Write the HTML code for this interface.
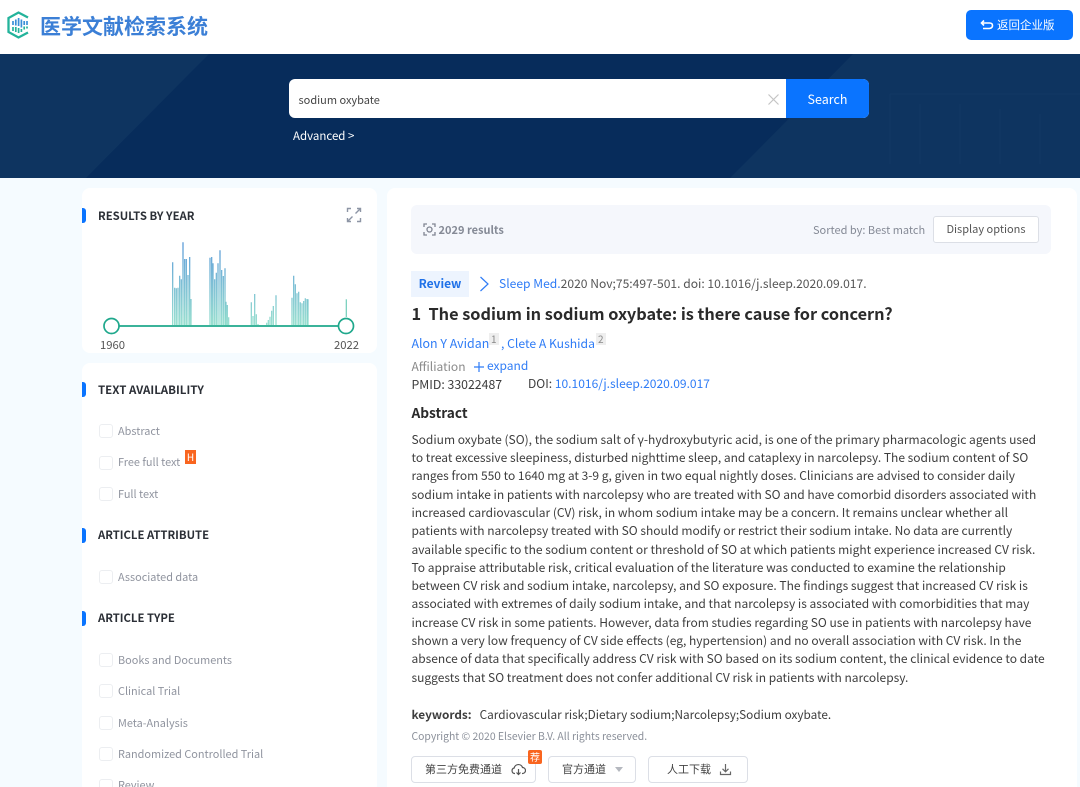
<!DOCTYPE html>
<html><head><meta charset="utf-8">
<style>
html,body{margin:0;padding:0;width:1080px;height:787px;overflow:hidden}
#w{width:1080px;height:787px;overflow:hidden;position:relative;background:#f5fbff;font-family:"Noto Sans CJK SC","Liberation Sans",sans-serif;font-size:12px;color:#3c3c3c}
.a{position:absolute;white-space:nowrap;line-height:18px}
.card{position:absolute;background:#fff;border-radius:8px}
.h{position:absolute;left:98px;font-weight:700;font-size:11.3px;color:#2b2f36;white-space:nowrap;line-height:16px}
.mk{position:absolute;left:82px;width:4px;height:15px;background:#0a74ff;border-radius:0 3px 3px 0}
.cb{position:absolute;left:99px;width:12px;height:12px;border:1px solid #eceef1;border-radius:3px;background:#fff}
.l{position:absolute;left:118px;color:#90949f;font-size:10.9px;line-height:16px;white-space:nowrap}
.t{position:absolute;left:411.5px;white-space:nowrap;font-size:12px;line-height:18px;color:#3d3d3d}
.blue{color:#2f7cf6}
.btn{position:absolute;top:756px;height:27px;border:1px solid #dcdfe6;border-radius:4px;background:#fff;box-sizing:border-box;font-size:11px;line-height:25px;color:#444;white-space:nowrap}
.s{position:absolute;background:#eee;color:#888;font-size:10px;line-height:12px;padding:0 2px}
</style></head><body><div id="w">
<div style="position:absolute;left:0;top:0;width:1080px;height:54px;background:#fff"></div>
<svg style="position:absolute;left:0;top:0" width="36" height="50" viewBox="0 0 36 50">
<path d="M28 17.500L18.500 12.500 8.500 18V32L18.500 37.500 28 32.500" fill="none" stroke="#23b39b" stroke-width="2.300"/>
<path d="M13 21v4M15.800 19.500v6M18.600 18v8M21.400 19.500v8M24.200 21v4M27 21v4" stroke="#3a8fd8" stroke-width="1.700" fill="none"/>
<path d="M13 27v4M15.800 27v5M18.600 28v5M21.400 29v3M24.200 26.500v3M27 26.500v2" stroke="#23b39b" stroke-width="1.700" fill="none"/>
</svg>
<div class="a" style="left:40px;top:12px;font-size:21px;line-height:28px;font-weight:700;color:#3b7fd6">医学文献检索系统</div>
<div class="a" style="left:966px;top:10px;width:107px;height:30px;background:#0a74ff;border-radius:5px"></div>
<svg style="position:absolute;left:980px;top:19px" width="14" height="12" viewBox="0 0 14 12"><path d="M4 1.500L1.500 4 4 6.500M1.500 4H9.500Q12.500 4 12.500 6.500T9.500 9.500H3" fill="none" stroke="#fff" stroke-width="1.600"/></svg>
<div class="a" style="left:997px;top:16px;font-size:11.500px;color:#fff">返回企业版</div>

<svg style="position:absolute;left:0;top:54px" width="1080" height="124" viewBox="0 0 1080 124">
<rect width="1080" height="124" fill="#072c5b"/>
<path d="M0 0H209L86 124H0Z" fill="#0e3460"/>
<path d="M853 0H1080V124H730Z" fill="#0e3460"/>
<path d="M890 40H1080M890 40V110M920 50V110M960 50V110M1000 55V110M1040 60V110" stroke="#113865" fill="none"/>
</svg>
<div class="a" style="left:289px;top:79px;width:580px;height:39px;background:#fff;border-radius:6px"></div>
<div class="a" style="left:786px;top:79px;width:83px;height:39px;background:#0a74ff;border-radius:0 6px 6px 0;color:#fff;font-size:12.500px;line-height:39px;text-align:center">Search</div>
<div class="a" style="left:298.500px;top:91px;font-size:11px;color:#444">sodium oxybate</div>
<svg style="position:absolute;left:767px;top:93px" width="13" height="13"><path d="M1.500 1.500L11.500 11.500M11.500 1.500L1.500 11.500" stroke="#c4c4c4" stroke-width="1.200"/></svg>
<div class="a" style="left:293px;top:127px;font-size:11.500px;color:#fff">Advanced &gt;</div>

<div class="card" style="left:82px;top:188px;width:295px;height:165px"></div>
<div class="card" style="left:82px;top:363px;width:295px;height:430px"></div>
<div class="mk" style="top:208px"></div>
<div class="h" style="top:207.500px">RESULTS BY YEAR</div>
<svg style="position:absolute;left:346px;top:207px" width="16" height="16" viewBox="0 0 16 16"><path d="M1.500 5V1.500H5M11 1.500H14.500V5M1.500 11V14.500H5M11 14.500H14.500V11M9.500 6.500L14 2M6.500 9.500L2 14" fill="none" stroke="#8d95a5" stroke-width="1.400"/></svg>

<svg style="position:absolute;left:0;top:0" width="400" height="360">
<defs><linearGradient id="g" gradientUnits="userSpaceOnUse" x1="0" y1="242" x2="0" y2="325"><stop offset="0" stop-color="#4f93d6"/><stop offset="1" stop-color="#8fdccb"/></linearGradient></defs>
<path stroke="url(#g)" stroke-width="1.200" fill="none" d="M172.700 325V262.300M174.700 325V287.700M176.300 325V288.300M178 325V287.700M179.700 325V275.700M181.300 325V279.300M183 325V242.300M184.700 325V259M186.300 325V259M188 325V275M189.700 325V257M191 325V299M210 325V257.700M211.700 325V257M213 325V263.300M214.700 325V279.300M216.300 325V272.700M218 325V263.300M220 325V250.300M221.700 325V270M223.300 325V276M225 325V268.300M226 325V301.700M227.300 325V305M228.700 325V317.300M251.300 325V302.300M253 325V316M254.700 325V294M256.300 325V314.300M258 325V324M266.700 325V322.700M268.300 325V320M270 325V316.700M271.700 325V310.700M273.300 325V306M276 325V295.300M292 325V297.700M293.700 325V275.700M295.300 325V284.300M297 325V293.300M298.700 325V291.700M300.300 325V302.300M302 325V303.300M303.700 325V301M305.300 325V298.300M307 325V299M308 325V299.300"/>
<path d="M346.300 299.300V317" stroke="#6fcdb9" stroke-width="1.200"/>
<path d="M118 326H339" stroke="#1fa88c" stroke-width="1.800"/>
<circle cx="111.500" cy="326" r="7.500" fill="#fff" stroke="#1fa88c" stroke-width="1.700"/>
<circle cx="346" cy="326" r="7.500" fill="#fff" stroke="#1fa88c" stroke-width="1.700"/>
</svg>
<div class="a" style="left:100px;top:336px;font-size:11.300px;color:#555">1960</div>
<div class="a" style="left:334px;top:336px;font-size:11.300px;color:#555">2022</div>

<div class="mk" style="top:382px"></div>
<div class="h" style="top:381.500px;font-size:11.500px">TEXT AVAILABILITY</div>
<div class="cb" style="top:424px"></div><div class="l" style="top:423px">Abstract</div>
<div class="cb" style="top:456px"></div><div class="l" style="top:454px">Free full text</div>
<div class="a" style="left:185px;top:450px;width:11px;height:14px;background:#f9651f;color:#fff;font-size:10px;line-height:14px;text-align:center">H</div>
<div class="cb" style="top:487px"></div><div class="l" style="top:486px">Full text</div>
<div class="mk" style="top:528px"></div>
<div class="h" style="top:527px">ARTICLE ATTRIBUTE</div>
<div class="cb" style="top:570px"></div><div class="l" style="top:569px">Associated data</div>
<div class="mk" style="top:611px"></div>
<div class="h" style="top:610px">ARTICLE TYPE</div>
<div class="cb" style="top:653px"></div><div class="l" style="top:652px">Books and Documents</div>
<div class="cb" style="top:684px"></div><div class="l" style="top:683px">Clinical Trial</div>
<div class="cb" style="top:716px"></div><div class="l" style="top:715px">Meta-Analysis</div>
<div class="cb" style="top:747px"></div><div class="l" style="top:746px">Randomized Controlled Trial</div>
<div class="cb" style="top:779px"></div><div class="l" style="top:777px">Review</div>

<div class="card" style="left:387px;top:188px;width:690px;height:610px"></div>
<div class="a" style="left:411px;top:205px;width:640px;height:49px;background:#f5f7fc;border-radius:6px"></div>
<svg style="position:absolute;left:423px;top:223px" width="13" height="13" viewBox="0 0 13 13"><path d="M1 4V1H4M9 1H12V4M1 9V12H4M9 12H12V9" fill="none" stroke="#808592" stroke-width="1.300"/><circle cx="6.500" cy="6.500" r="2.500" fill="none" stroke="#808592" stroke-width="1.300"/></svg>
<div class="a" style="left:438.500px;top:220.500px;font-size:11px;font-weight:700;color:#858a96">2029 results</div>
<div class="a" style="left:813px;top:220.500px;font-size:11px;color:#858a96">Sorted by: Best match</div>
<div class="a" style="left:933px;top:216px;width:106px;height:27px;background:#fff;border:1px solid #dcdfe6;border-radius:3px;box-sizing:border-box;text-align:center;line-height:25px;font-size:11px;color:#555">Display options</div>

<div class="a" style="left:411px;top:271px;width:58px;height:26px;background:#edf4fe;color:#1f71e8;font-weight:700;font-size:12px;line-height:26px;text-align:center">Review</div>
<svg style="position:absolute;left:479px;top:276px" width="11" height="16"><path d="M1.500 1L9 8 1.500 15" fill="none" stroke="#2f7cf6" stroke-width="1.200"/></svg>
<div class="t" style="left:499px;top:275px;font-size:12.100px"><span class="blue">Sleep Med.</span><span style="color:#555">2020 Nov;75:497-501. doi: 10.1016/j.sleep.2020.09.017.</span></div>
<div class="a" style="left:411.500px;top:302px;font-size:16.300px;line-height:22px;font-weight:700;color:#2a2a2a">1&nbsp; The sodium in sodium oxybate: is there cause for concern?</div>
<div class="t blue" style="top:334px;font-size:12.400px">Alon Y Avidan</div><div class="s" style="left:489px;top:333px">1</div>
<div class="t blue" style="left:501px;top:334px;font-size:12.200px">, Clete A Kushida</div><div class="s" style="left:596px;top:333px">2</div>
<div class="t" style="top:357.500px;color:#8a8a8a">Affiliation</div>
<svg style="position:absolute;left:473px;top:361px" width="12" height="12"><path d="M6 1V11M1 6H11" stroke="#2f7cf6" stroke-width="1.200"/></svg>
<div class="t blue" style="left:487px;top:357px">expand</div>
<div class="t" style="top:375px;font-size:12.300px">PMID: 33022487</div>
<div class="t" style="left:528px;top:375px;font-size:12.050px">DOI: <span class="blue">10.1016/j.sleep.2020.09.017</span></div>
<div class="a" style="left:411.500px;top:401.500px;font-size:13.700px;line-height:20px;font-weight:700;color:#2a2a2a">Abstract</div>

<div class="t" style="top:430.700px">Sodium oxybate (SO), the sodium salt of γ-hydroxybutyric acid, is one of the primary pharmacologic agents used</div>
<div class="t" style="top:449px">to treat excessive sleepiness, disturbed nighttime sleep, and cataplexy in narcolepsy. The sodium content of SO</div>
<div class="t" style="top:467.300px">ranges from 550 to 1640 mg at 3-9 g, given in two equal nightly doses. Clinicians are advised to consider daily</div>
<div class="t" style="top:485.600px">sodium intake in patients with narcolepsy who are treated with SO and have comorbid disorders associated with</div>
<div class="t" style="top:503.900px">increased cardiovascular (CV) risk, in whom sodium intake may be a concern. It remains unclear whether all</div>
<div class="t" style="top:522.200px">patients with narcolepsy treated with SO should modify or restrict their sodium intake. No data are currently</div>
<div class="t" style="top:540.500px">available specific to the sodium content or threshold of SO at which patients might experience increased CV risk.</div>
<div class="t" style="top:558.800px">To appraise attributable risk, critical evaluation of the literature was conducted to examine the relationship</div>
<div class="t" style="top:577.100px">between CV risk and sodium intake, narcolepsy, and SO exposure. The findings suggest that increased CV risk is</div>
<div class="t" style="top:595.400px">associated with extremes of daily sodium intake, and that narcolepsy is associated with comorbidities that may</div>
<div class="t" style="top:613.700px">increase CV risk in some patients. However, data from studies regarding SO use in patients with narcolepsy have</div>
<div class="t" style="top:632px">shown a very low frequency of CV side effects (eg, hypertension) and no overall association with CV risk. In the</div>
<div class="t" style="top:650.300px">absence of data that specifically address CV risk with SO based on its sodium content, the clinical evidence to date</div>
<div class="t" style="top:668.600px">suggests that SO treatment does not confer additional CV risk in patients with narcolepsy.</div>

<div class="t" style="top:706px;font-size:11.800px"><b style="font-weight:700">keywords:</b><span style="margin-left:8px">Cardiovascular risk;Dietary sodium;Narcolepsy;Sodium oxybate.</span></div>
<div class="t" style="top:727px;font-size:10.400px;color:#8a8f99">Copyright © 2020 Elsevier B.V. All rights reserved.</div>

<div class="btn" style="left:411px;width:125px;padding-left:13px">第三方免费通道</div>
<svg style="position:absolute;left:511px;top:763px" width="15" height="13" viewBox="0 0 15 13"><path d="M4 10.500H3.500A2.800 2.800 0 0 1 3.200 5 4.300 4.300 0 0 1 11.500 4.500 3 3 0 0 1 11.500 10.500H11M7.500 6V11.500M5.500 9.500L7.500 11.500 9.500 9.500" fill="none" stroke="#555" stroke-width="1.200"/></svg>
<div class="a" style="left:528px;top:750px;width:14px;height:14px;background:#f9651f;color:#fff;font-size:10px;line-height:14px;text-align:center;border-radius:2px">荐</div>
<div class="btn" style="left:548px;width:88px;padding-left:13px">官方通道</div>
<svg style="position:absolute;left:614px;top:767px" width="10" height="6"><path d="M1 0H9L5 5Z" fill="#b5b8bf"/></svg>
<div class="btn" style="left:648px;width:100px;padding-left:18px">人工下载</div>
<svg style="position:absolute;left:719px;top:763px" width="13" height="13" viewBox="0 0 13 13"><path d="M6.500 1V8.500M3.500 5.800L6.500 8.800 9.500 5.800M1.500 8.500V11.500H11.500V8.500" fill="none" stroke="#666" stroke-width="1.200"/></svg>
</div></body></html>
